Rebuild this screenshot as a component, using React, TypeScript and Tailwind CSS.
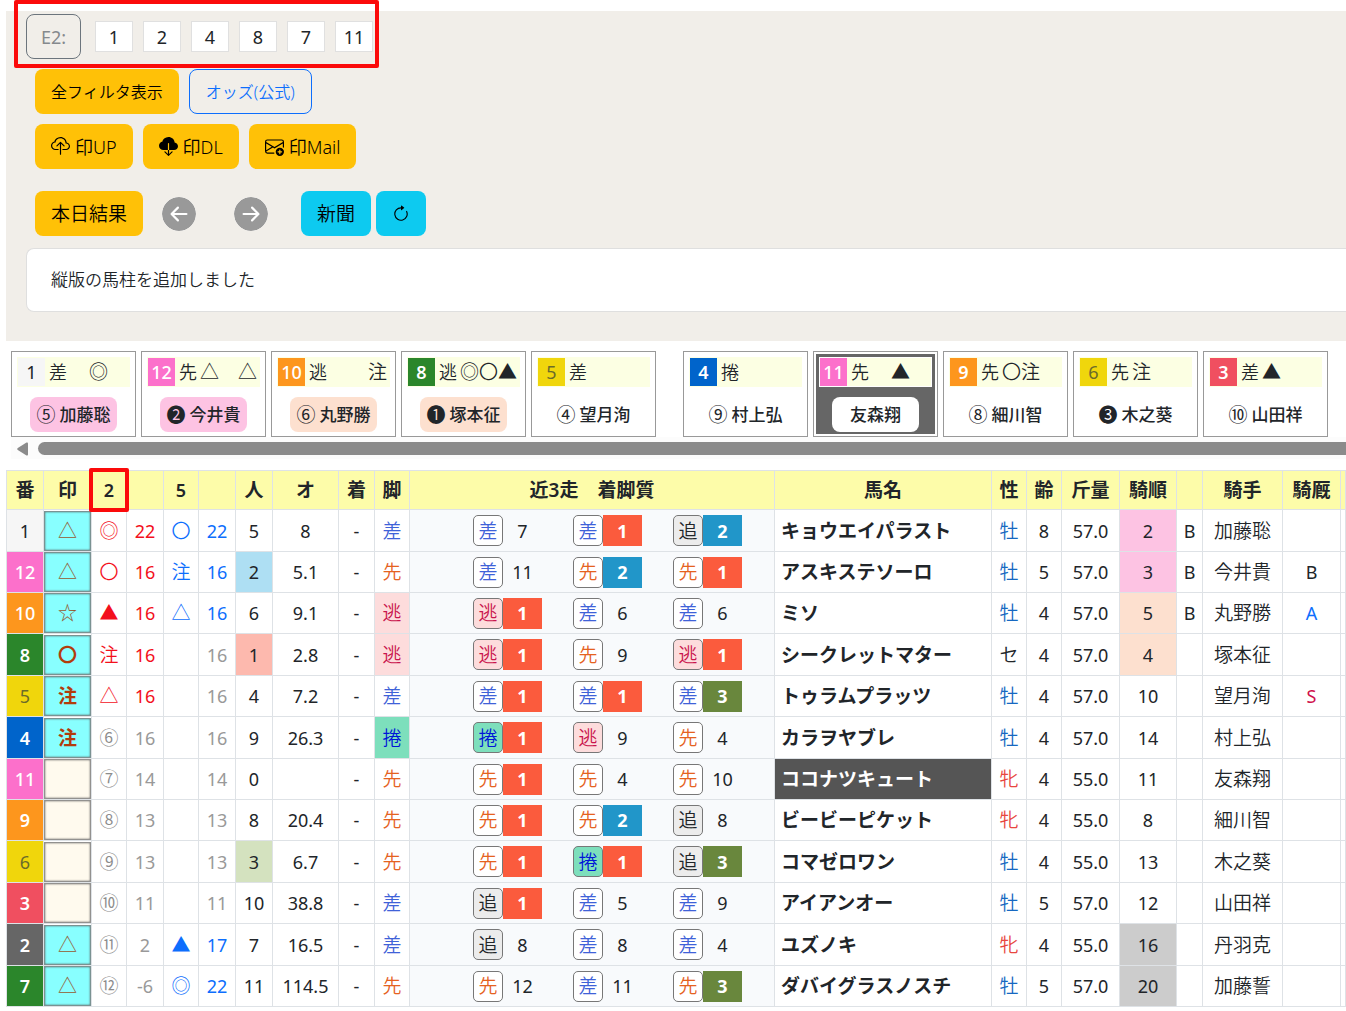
import {
  BsArrowClockwise,
  BsArrowLeftCircleFill,
  BsArrowRightCircleFill,
  BsCloudDownloadFill,
  BsCloudUpload,
  BsEnvelopePlus,
} from "react-icons/bs";

const frameColor: Record<number, string> = {
  1: "bg-[#f6f6f6] text-[#212529]",
  2: "bg-[#666666] text-white font-semibold",
  3: "bg-[#f04f60] text-white font-semibold",
  4: "bg-[#0064cb] text-white font-semibold",
  5: "bg-[#f0d60c] text-[#6b6b2a]",
  6: "bg-[#f0d60c] text-[#6b6b2a]",
  7: "bg-[#2b862b] text-white font-semibold",
  8: "bg-[#2b862b] text-white font-semibold",
  9: "bg-[#fd961d] text-white font-semibold",
  10: "bg-[#fd961d] text-white font-medium",
  11: "bg-[#fc70cb] text-white font-medium",
  12: "bg-[#fc70cb] text-white font-medium",
};

const styleText: Record<string, string> = {
  差: "text-[#3f62d8]",
  先: "text-[#e5621f]",
  逃: "text-[#c9144c] bg-[#fddcdc]",
  捲: "text-[#0014d8] bg-[#7ddfbc]",
  追: "text-[#212529] bg-[#ececec]",
};

const finishColor: Record<number, string> = {
  1: "bg-[#fb5b3d] text-white font-bold",
  2: "bg-[#2196c9] text-white font-bold",
  3: "bg-[#69873d] text-white font-bold",
};

const popularityColor: Record<string, string> = {
  1: "bg-[#fdb9ae]",
  2: "bg-[#aedff3]",
  3: "bg-[#d4e2bf]",
};

const rankColor: Record<string, string> = {
  2: "bg-[#fdc3e3]",
  3: "bg-[#fdc3e3]",
  4: "bg-[#fde0cf]",
  5: "bg-[#fde0cf]",
  16: "bg-[#cccccc]",
  20: "bg-[#cccccc]",
};

const sexColor: Record<string, string> = {
  牡: "text-[#1668c1]",
  牝: "text-[#e8473f]",
  セ: "text-[#212529]",
};

const stableColor: Record<string, string> = {
  A: "text-[#0d6efd]",
  B: "text-[#212529]",
  S: "text-[#d0104c]",
};

type Card = { no: number; style: string; marks: string; rank: string; jockey: string; tone: string; active?: boolean };

const leftCards: Card[] = [
  { no: 1, style: "差", marks: "　◎　", rank: "⑤", jockey: "加藤聡", tone: "bg-[#fdc3e3]" },
  { no: 12, style: "先", marks: "△　△", rank: "❷", jockey: "今井貴", tone: "bg-[#fdc3e3]" },
  { no: 10, style: "逃", marks: "　　注", rank: "⑥", jockey: "丸野勝", tone: "bg-[#fde0cf]" },
  { no: 8, style: "逃", marks: "◎〇▲", rank: "❶", jockey: "塚本征", tone: "bg-[#fde0cf]" },
  { no: 5, style: "差", marks: "", rank: "④", jockey: "望月洵", tone: "" },
];

const rightCards: Card[] = [
  { no: 4, style: "捲", marks: "", rank: "⑨", jockey: "村上弘", tone: "" },
  { no: 11, style: "先", marks: "　▲　", rank: "", jockey: "友森翔", tone: "bg-white", active: true },
  { no: 9, style: "先", marks: "〇注", rank: "⑧", jockey: "細川智", tone: "" },
  { no: 6, style: "先", marks: "注", rank: "❸", jockey: "木之葵", tone: "" },
  { no: 3, style: "差", marks: "▲", rank: "⑩", jockey: "山田祥", tone: "" },
];

type Run = [string, number];
type Horse = {
  no: number;
  mark: string;
  m2: string;
  p2: string;
  m5: string;
  p5: string;
  pop: string;
  odds: string;
  style: string;
  runs: Run[];
  name: string;
  sex: string;
  age: number;
  weight: string;
  rank: string;
  blinker: string;
  jockey: string;
  stable: string;
};

const horses: Horse[] = [
  { no: 1, mark: "△", m2: "◎", p2: "22", m5: "〇", p5: "22", pop: "5", odds: "8", style: "差", runs: [["差", 7], ["差", 1], ["追", 2]], name: "キョウエイパラスト", sex: "牡", age: 8, weight: "57.0", rank: "2", blinker: "B", jockey: "加藤聡", stable: "" },
  { no: 12, mark: "△", m2: "〇", p2: "16", m5: "注", p5: "16", pop: "2", odds: "5.1", style: "先", runs: [["差", 11], ["先", 2], ["先", 1]], name: "アスキステソーロ", sex: "牡", age: 5, weight: "57.0", rank: "3", blinker: "B", jockey: "今井貴", stable: "B" },
  { no: 10, mark: "☆", m2: "▲", p2: "16", m5: "△", p5: "16", pop: "6", odds: "9.1", style: "逃", runs: [["逃", 1], ["差", 6], ["差", 6]], name: "ミソ", sex: "牡", age: 4, weight: "57.0", rank: "5", blinker: "B", jockey: "丸野勝", stable: "A" },
  { no: 8, mark: "〇", m2: "注", p2: "16", m5: "", p5: "16", pop: "1", odds: "2.8", style: "逃", runs: [["逃", 1], ["先", 9], ["逃", 1]], name: "シークレットマター", sex: "セ", age: 4, weight: "57.0", rank: "4", blinker: "", jockey: "塚本征", stable: "" },
  { no: 5, mark: "注", m2: "△", p2: "16", m5: "", p5: "16", pop: "4", odds: "7.2", style: "差", runs: [["差", 1], ["差", 1], ["差", 3]], name: "トゥラムプラッツ", sex: "牡", age: 4, weight: "57.0", rank: "10", blinker: "", jockey: "望月洵", stable: "S" },
  { no: 4, mark: "注", m2: "⑥", p2: "16", m5: "", p5: "16", pop: "9", odds: "26.3", style: "捲", runs: [["捲", 1], ["逃", 9], ["先", 4]], name: "カラヲヤブレ", sex: "牡", age: 4, weight: "57.0", rank: "14", blinker: "", jockey: "村上弘", stable: "" },
  { no: 11, mark: "", m2: "⑦", p2: "14", m5: "", p5: "14", pop: "0", odds: "", style: "先", runs: [["先", 1], ["先", 4], ["先", 10]], name: "ココナツキュート", sex: "牝", age: 4, weight: "55.0", rank: "11", blinker: "", jockey: "友森翔", stable: "" },
  { no: 9, mark: "", m2: "⑧", p2: "13", m5: "", p5: "13", pop: "8", odds: "20.4", style: "先", runs: [["先", 1], ["先", 2], ["追", 8]], name: "ビービーピケット", sex: "牝", age: 4, weight: "55.0", rank: "8", blinker: "", jockey: "細川智", stable: "" },
  { no: 6, mark: "", m2: "⑨", p2: "13", m5: "", p5: "13", pop: "3", odds: "6.7", style: "先", runs: [["先", 1], ["捲", 1], ["追", 3]], name: "コマゼロワン", sex: "牡", age: 4, weight: "55.0", rank: "13", blinker: "", jockey: "木之葵", stable: "" },
  { no: 3, mark: "", m2: "⑩", p2: "11", m5: "", p5: "11", pop: "10", odds: "38.8", style: "差", runs: [["追", 1], ["差", 5], ["差", 9]], name: "アイアンオー", sex: "牡", age: 5, weight: "57.0", rank: "12", blinker: "", jockey: "山田祥", stable: "" },
  { no: 2, mark: "△", m2: "⑪", p2: "2", m5: "▲", p5: "17", pop: "7", odds: "16.5", style: "差", runs: [["追", 8], ["差", 8], ["差", 4]], name: "ユズノキ", sex: "牝", age: 4, weight: "55.0", rank: "16", blinker: "", jockey: "丹羽克", stable: "" },
  { no: 7, mark: "△", m2: "⑫", p2: "-6", m5: "◎", p5: "22", pop: "11", odds: "114.5", style: "先", runs: [["先", 12], ["差", 11], ["先", 3]], name: "ダバイグラスノスチ", sex: "牡", age: 5, weight: "57.0", rank: "20", blinker: "", jockey: "加藤誓", stable: "" },
];

const columns: [string, string][] = [
  ["番", "w-[38px]"],
  ["印", "w-[48px]"],
  ["2", "w-[35px]"],
  ["", "w-[37px]"],
  ["5", "w-[35px]"],
  ["", "w-[37px]"],
  ["人", "w-[37px]"],
  ["オ", "w-[66px]"],
  ["着", "w-[36px]"],
  ["脚", "w-[35px]"],
  ["近3走　着脚質", "w-[365px]"],
  ["馬名", "w-[217px]"],
  ["性", "w-[35px]"],
  ["齢", "w-[35px]"],
  ["斤量", "w-[58px]"],
  ["騎順", "w-[57px]"],
  ["", "w-[26px]"],
  ["騎手", "w-[80px]"],
  ["騎厩", "w-[58px]"],
  ["", ""],
];

const yellowButton = "flex h-[45px] items-center gap-[5px] rounded-lg bg-[#ffc107] px-4 font-[350] text-black";
const cell = "border-r border-b border-[#dee2e6] p-0 text-center";
const kanji = "text-[19px] font-[350]";

function HorseCard({ card }: { card: Card }) {
  return (
    <li className="h-[86px] w-[125px] shrink-0 border border-[#999] bg-white p-0.5">
      <div className={`flex h-full flex-col items-center p-[3px] ${card.active ? "bg-[#666]" : ""}`}>
        <div className={`flex h-[30px] w-full items-center bg-[#fcffe3] ${card.active ? "border border-white" : "p-px"}`}>
          <span className={`flex h-7 w-[27px] shrink-0 items-center justify-center text-lg ${frameColor[card.no]}`}>{card.no}</span>
          <span className="ml-1 text-[18px] font-[350]">{card.style}</span>
          <span className="ml-[3px] flex text-[19px] font-[350] whitespace-pre">{card.marks}</span>
        </div>
        <div className={`mt-2.5 flex h-[35px] w-[87px] shrink-0 items-center justify-center gap-1 rounded-lg ${card.tone}`}>
          {card.rank && <span className="text-[19px] font-normal">{card.rank}</span>}
          <span className="text-[17px] font-medium">{card.jockey}</span>
        </div>
      </div>
    </li>
  );
}

function HorseRow({ h }: { h: Horse }) {
  const circled = h.m2 >= "①" && h.m2 <= "⑳";
  const tone2 = circled ? "text-[#8c8c8c]" : "text-[#f3101c]";
  const tone5 = h.m5 ? "text-[#0d6efd]" : "text-[#999]";
  const boldMark = h.mark === "〇" || h.mark === "注";
  return (
    <tr className="h-[41px] nth-[5n+1]:h-[42px] nth-[5n+4]:h-[42px]">
      <td className={`${cell} border-l ${frameColor[h.no]}`}>{h.no}</td>
      <td className={cell}>
        <button
          type="button"
          aria-label={`${h.name}の印`}
          className={`block h-10 w-full border border-[#777]/80 text-[19px] inset-shadow-[0_0_2px_#555] ${h.mark ? "bg-[#88ffff]" : "bg-[#fffaee]"} ${
            boldMark ? "font-bold text-[#b23c0c]" : "font-[350] text-[#93592f]"
          }`}
        >
          {h.mark}
        </button>
      </td>
      <td className={`${cell} ${kanji} ${tone2}`}>{h.m2}</td>
      <td className={`${cell} ${circled ? "text-[#999]" : "text-[#f3101c]"}`}>{h.p2}</td>
      <td className={`${cell} ${kanji} ${tone5}`}>{h.m5}</td>
      <td className={`${cell} ${tone5}`}>{h.p5}</td>
      <td className={`${cell} ${popularityColor[h.pop] ?? ""}`}>{h.pop}</td>
      <td className={cell}>{h.odds}</td>
      <td className={cell}>-</td>
      <td className={`${cell} ${kanji} ${styleText[h.style]}`}>{h.style}</td>
      <td className={`${cell} bg-[#f8fafc]`}>
        <div className="flex pl-[63px]">
          {h.runs.map(([style, place], i) => (
            <div key={i} className="flex w-[100px]">
              <span className={`flex h-[31px] w-[30px] items-center justify-center rounded-[5px] border border-[#777] ${kanji} ${style === "差" || style === "先" ? "bg-white" : ""} ${styleText[style]}`}>
                {style}
              </span>
              <span className={`flex h-[31px] w-[39px] items-center justify-center ${finishColor[place] ?? ""}`}>{place}</span>
            </div>
          ))}
        </div>
      </td>
      <td className={`${cell} text-[19px] font-semibold ${h.no === 11 ? "bg-[#555] text-white" : ""}`}>
        <div className="pl-1.5 text-left">{h.name}</div>
      </td>
      <td className={`${cell} ${kanji} ${sexColor[h.sex]}`}>{h.sex}</td>
      <td className={cell}>{h.age}</td>
      <td className={cell}>{h.weight}</td>
      <td className={`${cell} ${rankColor[h.rank] ?? ""}`}>{h.rank}</td>
      <td className={cell}>{h.blinker}</td>
      <td className={`${cell} ${kanji}`}>{h.jockey}</td>
      <td className={`${cell} ${stableColor[h.stable] ?? ""}`}>{h.stable}</td>
      <td className={cell} />
    </tr>
  );
}

export default function App() {
  return (
    <main className="overflow-hidden bg-white pt-[11px] pb-1 pl-1.5 font-['Noto_Sans','Noto_Sans_CJK_JP',sans-serif] text-lg leading-6 text-[#212529]">
      <section className="bg-[#f1eee9] pt-[3px] pb-[29px] pl-5">
        <div className="relative flex w-fit items-center gap-3.5">
          <button type="button" disabled className="h-[45px] w-[55px] rounded-lg border border-[#6c757d] text-[#85898d]">
            E2:
          </button>
          <div className="flex gap-2.5">
            {[1, 2, 4, 8, 7, 11].map((n) => (
              <button key={n} type="button" className="h-[31px] w-[38px] border border-[#e0e0e0] bg-white">
                {n}
              </button>
            ))}
          </div>
          <div className="pointer-events-none absolute -top-3.5 -right-1.5 -bottom-[9px] -left-3 rounded-xs border-4 border-[#fb0a0a]" />
        </div>

        <div className="mt-2.5 flex gap-2.5 pl-[9px]">
          <button type="button" className={`${yellowButton} text-base`}>全フィルタ表示</button>
          <a href="#odds" className="flex h-[45px] items-center rounded-lg border border-[#0d6efd] px-4 text-base font-[350] text-[#0d6efd]">
            オッズ(公式)
          </a>
        </div>
        <div className="mt-2.5 flex gap-2.5 pl-[9px]">
          <button type="button" className={yellowButton}>
            <BsCloudUpload className="size-[19px]" />
            印UP
          </button>
          <button type="button" className={yellowButton}>
            <BsCloudDownloadFill className="size-[19px]" />
            印DL
          </button>
          <button type="button" className={yellowButton}>
            <BsEnvelopePlus className="size-[19px]" />
            印Mail
          </button>
        </div>
        <div className="mt-[22px] flex items-center pl-[9px]">
          <button type="button" className={`${yellowButton} text-[19px]`}>本日結果</button>
          <button type="button" aria-label="前へ" className="ml-[19px] text-[#999]">
            <BsArrowLeftCircleFill className="size-[34px] rounded-full bg-white" />
          </button>
          <button type="button" aria-label="次へ" className="ml-[38px] text-[#999]">
            <BsArrowRightCircleFill className="size-[34px] rounded-full bg-white" />
          </button>
          <button type="button" className="ml-[33px] h-[45px] rounded-lg bg-[#0dcaf0] px-4 text-[19px] font-[350] text-black">新聞</button>
          <button type="button" aria-label="更新" className="ml-[5px] h-[45px] rounded-lg bg-[#0dcaf0] px-4 text-black">
            <BsArrowClockwise className="size-[18px]" />
          </button>
        </div>
        <p className="mt-3 flex h-16 items-center rounded-l-lg border border-r-0 border-[#dfdfdf] bg-white pl-6 text-[17px] font-[350]">
          縦版の馬柱を追加しました
        </p>
      </section>

      <section className="pl-[5px]">
        <div className="flex gap-[27px] overflow-hidden pt-2.5">
          <ul className="flex gap-[5px]">
            {leftCards.map((c) => (
              <HorseCard key={c.no} card={c} />
            ))}
          </ul>
          <ul className="flex gap-[5px]">
            {rightCards.map((c) => (
              <HorseCard key={c.no} card={c} />
            ))}
          </ul>
        </div>
        <div className="flex h-[22px] items-center gap-2.5 bg-[#fcfcfc] pt-px pl-1.5">
          <svg viewBox="0 0 11 14" className="h-3.5 w-[11px]" fill="#8b8b8b">
            <path d="M9.5.6Q11 0 11 1.6V12.4Q11 14 9.5 13.4L.8 8Q-.4 7 .8 6Z" />
          </svg>
          <div className="h-[13px] flex-1 rounded-l-full bg-[#8b8b8b]" />
        </div>
      </section>

      <table className="mt-[11px] w-full table-fixed border-separate border-spacing-0">
        <colgroup>
          {columns.map(([, width], i) => (
            <col key={i} className={width} />
          ))}
        </colgroup>
        <thead>
          <tr className="h-10">
            {columns.map(([label], i) => (
              <th
                key={i}
                className={`border-t border-r border-b border-[#dee2e6] bg-[#fdfca9] p-0 font-semibold whitespace-nowrap first:border-l ${
                  label === "2" ? "relative z-10" : label === "5" ? "" : "text-[19px]"
                }`}
              >
                {label}
                {label === "2" && <span className="pointer-events-none absolute -inset-[3px] rounded-xs border-4 border-[#fb0a0a]" />}
              </th>
            ))}
          </tr>
        </thead>
        <tbody>
          {horses.map((h) => (
            <HorseRow key={h.no} h={h} />
          ))}
        </tbody>
      </table>
    </main>
  );
}
